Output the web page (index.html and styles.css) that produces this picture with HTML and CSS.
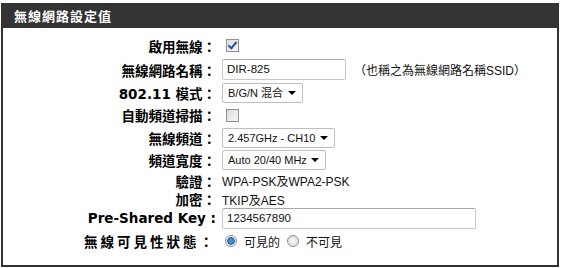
FILE: index.html
```html
<!DOCTYPE html>
<html lang="zh-Hant">
<head>
  <meta charset="UTF-8">
  <title>無線網路設定值</title>
  <link rel="stylesheet" href="styles.css">
</head>
<body>
  <div class="box">
    <h2 class="box-title">無線網路設定值</h2>
    <div class="form">
      <div class="row h23">
        <label class="lbl">啟用無線：</label>
        <div class="val"><span class="check on"></span></div>
      </div>
      <div class="row h25">
        <label class="lbl">無線網路名稱：</label>
        <div class="val"><span class="field ssid">DIR-825</span><span class="note">（也稱之為無線網路名稱SSID）</span></div>
      </div>
      <div class="row h21">
        <label class="lbl">802.11 模式：</label>
        <div class="val"><span class="select w-mode">B/G/N 混合</span></div>
      </div>
      <div class="row h24">
        <label class="lbl">自動頻道掃描：</label>
        <div class="val"><span class="check"></span></div>
      </div>
      <div class="row h22">
        <label class="lbl">無線頻道：</label>
        <div class="val"><span class="select w-chan">2.457GHz - CH10</span></div>
      </div>
      <div class="row h22">
        <label class="lbl">頻道寬度：</label>
        <div class="val"><span class="select w-width">Auto 20/40 MHz</span></div>
      </div>
      <div class="row h19">
        <label class="lbl">驗證：</label>
        <div class="val">WPA-PSK及WPA2-PSK</div>
      </div>
      <div class="row h18">
        <label class="lbl">加密：</label>
        <div class="val">TKIP及AES</div>
      </div>
      <div class="row h20">
        <label class="lbl">Pre-Shared Key :</label>
        <div class="val"><span class="field psk">1234567890</span></div>
      </div>
      <div class="row h26">
        <label class="lbl wide">無線可見性狀態：</label>
        <div class="val">
          <span class="radio on"></span><span class="opt">可見的</span>
          <span class="radio"></span><span class="opt">不可見</span>
        </div>
      </div>
    </div>
  </div>
</body>
</html>
```

FILE: styles.css
```css
body {
  margin: 3px 4px 0 1px;
  font-family: "Liberation Sans", "Noto Sans CJK TC", sans-serif;
  font-size: 12px;
  color: #111;
  background: #fff;
}

.box {
  width: 554px;
  height: 262px;
  border: 2px solid #333;
  border-top: none;
}

.box-title {
  margin: 0 -2px;
  height: 25px;
  line-height: 25px;
  padding-left: 13px;
  background: #333;
  color: #fff;
  font-family: "Noto Sans CJK TC", sans-serif;
  font-size: 13px;
  font-weight: bold;
  letter-spacing: 1px;
}

.form {
  padding-top: 6px;
}

.row {
  display: flex;
  align-items: center;
}

.h18 { height: 18px; }
.h19 { height: 19px; }
.h20 { height: 20px; }
.h21 { height: 21px; }
.h22 { height: 22px; }
.h23 { height: 23px; }
.h24 { height: 24px; }
.h25 { height: 25px; }
.h26 { height: 26px; }

.lbl {
  width: 213px;
  flex: none;
  text-align: right;
  font-family: "DejaVu Sans", "Noto Sans CJK TC", sans-serif;
  font-size: 13.5px;
  font-weight: bold;
  color: #000;
}

.lbl.wide {
  letter-spacing: 3px;
  margin-right: -3px;
}

.val {
  display: flex;
  align-items: center;
  padding-left: 6px;
  font-family: "Liberation Sans", "Noto Sans CJK TC", sans-serif;
  font-size: 12px;
  color: #111;
}

.field {
  box-sizing: border-box;
  height: 21px;
  line-height: 19px;
  padding-left: 4px;
  border: 1px solid #c8c8c8;
  border-top-color: #a8a8a8;
  border-radius: 2px;
  background: #fff;
  font-size: 11.5px;
}

.ssid { width: 124px; }
.psk { width: 254px; }

.note {
  margin-left: 8px;
}

.select {
  position: relative;
  box-sizing: border-box;
  height: 20px;
  line-height: 18px;
  padding-left: 5px;
  border: 1px solid #bdbdbd;
  border-radius: 2px;
  background: #fff;
  font-size: 11px;
}

.select::after {
  content: "";
  position: absolute;
  right: 6px;
  top: 7px;
  border-left: 4px solid transparent;
  border-right: 4px solid transparent;
  border-top: 4px solid #000;
}

.w-mode { width: 81px; }
.w-chan { width: 113px; }
.w-width { width: 104px; }

.check {
  box-sizing: border-box;
  width: 13px;
  height: 13px;
  margin-left: 4px;
  border: 1px solid #8f8f8f;
  background: linear-gradient(135deg, #dcdcdc, #f7f7f7);
  position: relative;
}

.check.on::after {
  content: "";
  position: absolute;
  left: 3px;
  top: 0;
  width: 3px;
  height: 7px;
  border-right: 2px solid #2a4f9c;
  border-bottom: 2px solid #2a4f9c;
  transform: rotate(40deg);
}

.radio {
  box-sizing: border-box;
  width: 12px;
  height: 12px;
  margin-left: 6px;
  border: 1px solid #8e8f8f;
  border-radius: 50%;
  background: radial-gradient(circle, #fafafa, #d4d4d4);
}

.radio.on {
  background: radial-gradient(circle, #3f8fd2 0 2.5px, #1c5b9a 3px 3.5px, #f3f3f3 4px);
}

.opt {
  margin-left: 7px;
  margin-right: 1px;
}
```
